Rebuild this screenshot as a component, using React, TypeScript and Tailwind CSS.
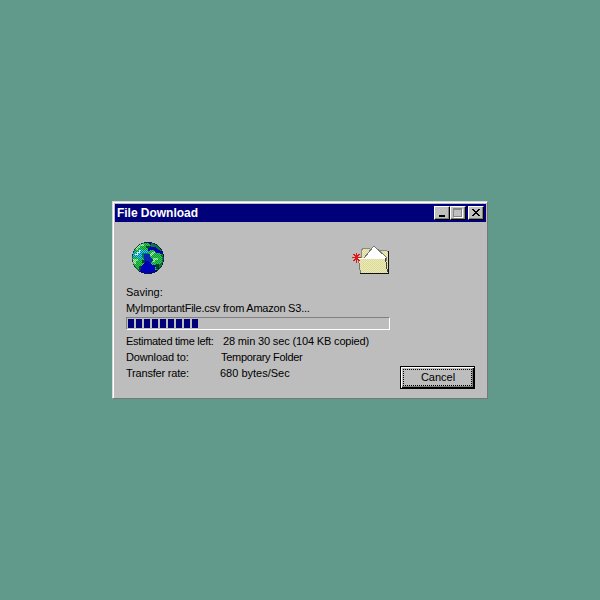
import type { ReactNode } from "react";

function Line({ children, className }: { children: ReactNode; className: string }) {
  return <span className={`block h-4 whitespace-pre leading-4 ${className}`}>{children}</span>;
}

function Globe() {
  return (
    <svg width="34" height="34" viewBox="0 0 34 34" shapeRendering="crispEdges">
      <defs>
        <clipPath id="ball"><circle cx="17" cy="17" r="15.5" /></clipPath>
        <pattern id="landDots" width="2" height="2" patternUnits="userSpaceOnUse">
          <rect width="2" height="2" fill="#089838" />
          <rect width="1" height="1" fill="#38c850" />
          <rect x="1" y="1" width="1" height="1" fill="#38c850" />
        </pattern>
        <pattern id="paleDots" width="2" height="2" patternUnits="userSpaceOnUse">
          <rect width="2" height="2" fill="#50cc60" />
          <rect width="1" height="1" fill="#b0f0b0" />
          <rect x="1" y="1" width="1" height="1" fill="#b0f0b0" />
        </pattern>
        <pattern id="seaDots" width="2" height="2" patternUnits="userSpaceOnUse">
          <rect width="2" height="2" fill="#087da8" />
          <rect width="1" height="1" fill="#30d0e0" />
          <rect x="1" y="1" width="1" height="1" fill="#30d0e0" />
        </pattern>
        <pattern id="darkDots" width="2" height="2" patternUnits="userSpaceOnUse">
          <rect width="1" height="1" fill="#000030" />
          <rect x="1" y="1" width="1" height="1" fill="#000030" />
        </pattern>
      </defs>
      <circle cx="17" cy="17" r="16" fill="#181e24" />
      <g clipPath="url(#ball)">
        <rect width="34" height="34" fill="#0000b8" />
        <path d="M1 8h14l4 4-3 4-4 3H1z" fill="url(#seaDots)" />
        <path d="M5 5l5-3h7l3 3-3 2v2h-4l-4-1-3 3-3 2z" fill="url(#landDots)" />
        <path d="M5 7l4-4h4v2H9v2H7v2H5z" fill="url(#paleDots)" />
        <path d="M11 12h5l2 2-2 3-3 2-2-3z" fill="#087860" />
        <path d="M20 2h3l5 3 3 5-4-1-3-3h-4z" fill="#087838" />
        <path d="M17 11l3-2h3v2l3 1 6 1 1 5-3 3-3-4-4-1-3 1-2-3z" fill="url(#landDots)" />
        <path d="M19 13l5-3v2l-4 3h-2z" fill="url(#paleDots)" />
        <path d="M1 16h4l3 2h5v5l-4 3v4H6l-4-5z" fill="url(#landDots)" />
        <path d="M2 18h5v2H5v3H2z" fill="url(#paleDots)" />
        <path d="M20 18l3-2h5l4 3-1 6-4 5-3-1 1-5h-4l-2-3z" fill="url(#landDots)" />
        <path d="M22 17h5v2h-3v2h-3z" fill="url(#paleDots)" />
        <path d="M25 23h3v5h-3zM8 25h2v4H8zM11 19h3v3h-3zM15 5h4v2h-4z" fill="#004828" />
        <path d="M13 13h6v3l3 3-2 3-3-2-4-1z" fill="#0828b0" />
        <path d="M29 5l5 5v24H13l12-5 6-9z" fill="url(#darkDots)" opacity=".6" />
        <path d="M4 13h2v-2h2V9h2" fill="none" stroke="#d8f8ff" />
      </g>
    </svg>
  );
}

function Folder() {
  return (
    <svg width="40" height="32" viewBox="0 0 40 32" shapeRendering="crispEdges">
      <defs>
        <pattern id="folderDots" width="2" height="2" patternUnits="userSpaceOnUse">
          <rect width="2" height="2" fill="#dedb80" />
          <rect width="1" height="1" fill="#e8e8d0" />
          <rect x="1" y="1" width="1" height="1" fill="#e8e8d0" />
        </pattern>
      </defs>
      <path d="M10 7l2-3h6l2 2h15l2 2v21h-3L10 15z" fill="url(#folderDots)" stroke="#888" />
      <path d="M13 14L22 3l1-1 12 11v3H12z" fill="#fff" stroke="#777" />
      <path d="M7 14h27l3 15H9z" fill="url(#folderDots)" />
      <path d="M7 14.500h27" stroke="#fff" fill="none" />
      <path d="M7.500 15l2 14" stroke="#777" fill="none" />
      <path d="M9 29.500h29M37.500 7v22" stroke="#111" fill="none" />
      <path d="M34.500 14l2 14" stroke="#444" fill="none" />
      <path d="M5 9h1v10H5zM1 13h9v1H1zM2 10h2v1h1v1h1v-1h1v-1h2v1H8v1H7v1H4v-1H3v-1H2zM4 14h3v1h1v1h1v1H7v-1H6v-1H5v1H4v1H2v-1h1v-1h1z" fill="#e01818" />
    </svg>
  );
}

function CaptionButton({ children }: { children: ReactNode }) {
  return (
    <button className="h-[14px] w-4 border border-b-black border-l-white border-r-black border-t-white bg-[#c0c0c0] shadow-[inset_-1px_-1px_0_#808080]">
      <svg width="14" height="12" viewBox="0 0 14 12" shapeRendering="crispEdges">{children}</svg>
    </button>
  );
}

export default function App() {
  return (
    <main className="flex h-[600px] w-[600px] items-start justify-center bg-[#61998b] pt-[201px] font-['Liberation_Sans',Arial,sans-serif] text-[11px] text-black">
      <section className="h-[198px] w-[376px] border border-b-[#777] border-l-[#d8d8d8] border-r-[#777] border-t-[#d8d8d8] bg-[#bdbdbd] py-[2px] pl-[2px] pr-px shadow-[inset_1px_1px_0_#fff]">
        <header className="flex h-[18px] items-center bg-[#00007b] pl-[2px] pr-[2px] text-white">
          <h1 className="mr-auto whitespace-nowrap text-[12px] font-bold leading-[18px] tracking-[-0.03px]">File Download</h1>
          <div className="flex">
            <CaptionButton><path d="M4 8h6v2H4z" /></CaptionButton>
            <CaptionButton><path d="M2 1.500h9M2 2.500h9M2.500 2v8M10.500 2v8M2 9.500h9" stroke="#868686" fill="none" /><path d="M3 10.500h9M11.500 2v8" stroke="#fff" fill="none" /></CaptionButton>
            <div className="w-[2px]" />
            <CaptionButton><path d="M3 2h2v1h1v1h2V3h1V2h2v1h-1v1H9v1H8v1h1v1h1v1h1v1H9V8H8V7H6v1H5v1H3V8h1V7h1V6h1V5H5V4H4V3H3z" /></CaptionButton>
          </div>
        </header>
        <div className="flex flex-col pl-[11px] pr-[11px]">
          <div className="flex h-[62px] pl-[5px] pt-[19px]">
            <Globe />
            <div className="ml-[186px] pt-[3px]"><Folder /></div>
          </div>
          <Line className="">Saving:</Line>
          <Line className="tracking-[-0.225px]">MyImportantFile.csv from Amazon S3...</Line>
          <div className="mt-px flex h-[13px] w-[264px] gap-[2px] border border-b-white border-l-[#808080] border-r-white border-t-[#808080] p-px">
            {Array.from({ length: 9 }, (_, i) => <i key={i} className="h-[9px] w-[6px] bg-[#00007b]" />)}
          </div>
          <div className="flex justify-between pt-[3px]">
            <div className="grid h-12 grid-cols-[94px_170px]">
              <Line className="tracking-[-0.3px]">Estimated time left:</Line>
              <Line className="pl-[3px] tracking-[-0.15px]">28 min 30 sec (104 KB copied)</Line>
              <Line className="tracking-[-0.13px]">Download to:</Line>
              <Line className="pl-px tracking-[-0.3px]">Temporary Folder</Line>
              <Line className="tracking-[-0.2px]">Transfer rate:</Line>
              <Line className="">680 bytes/Sec</Line>
            </div>
            <button className="mt-[33px] h-[23px] w-[75px] shrink-0 border border-black bg-[#bdbdbd] p-[2px] shadow-[inset_1px_1px_0_#fff,inset_-1px_-1px_0_#000,inset_-2px_-2px_0_#808080]">
              <span className="block h-[17px] w-[69px] border border-dotted border-black pl-px leading-[15px]">Cancel</span>
            </button>
          </div>
        </div>
      </section>
    </main>
  );
}
